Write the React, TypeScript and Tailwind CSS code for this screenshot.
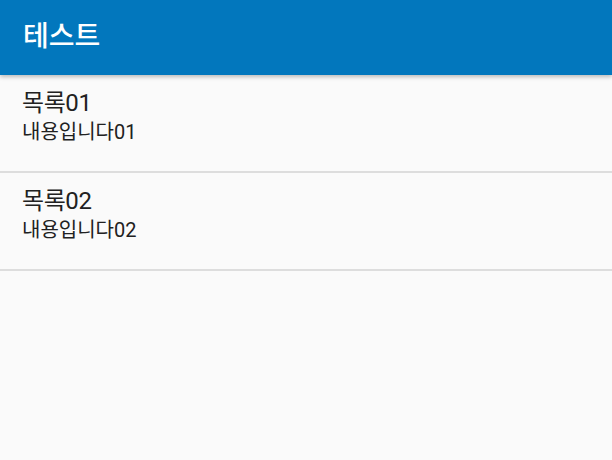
const items = [
  { title: '목록01', content: '내용입니다01' },
  { title: '목록02', content: '내용입니다02' },
];

export default function App() {
  return (
    <div
      className="flex h-[460px] w-[612px] flex-col bg-[#fafafa] overflow-hidden"
      style={{ fontFamily: 'Roboto, "Noto Sans CJK KR", sans-serif' }}
    >
      {/* App bar */}
      <header className="z-10 flex h-[75px] shrink-0 items-center bg-[#0277bd] px-[23px] pb-[2px] shadow-[0_2px_4px_rgba(0,0,0,0.25)]">
        <h1 className="text-[28px] font-medium leading-none text-white">테스트</h1>
      </header>

      {/* List */}
      <ul>
        {items.map((item) => (
          <li
            key={item.title}
            className="flex h-[98px] flex-col border-b-2 border-[#dddddd] px-[22px] pt-[13px]"
          >
            <span className="text-[24px] leading-[31px] tracking-[-0.4px] text-[#212121]">{item.title}</span>
            <span className="text-[20px] leading-[26px] text-[#212121]">{item.content}</span>
          </li>
        ))}
      </ul>
    </div>
  );
}
